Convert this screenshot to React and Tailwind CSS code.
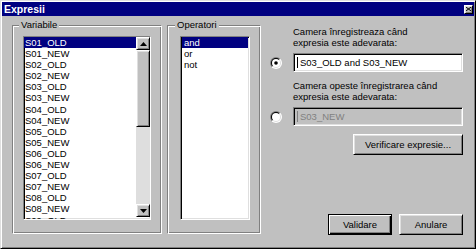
import React from "react";

const variabile = [
  "S01_OLD", "S01_NEW", "S02_OLD", "S02_NEW", "S03_OLD", "S03_NEW",
  "S04_OLD", "S04_NEW", "S05_OLD", "S05_NEW", "S06_OLD", "S06_NEW",
  "S07_OLD", "S07_NEW", "S08_OLD", "S08_NEW", "S09_OLD",
];
const operatori = ["and", "or", "not"];

// win95 style bevels
const sunken =
  "border border-t-[#808080] border-l-[#808080] border-r-white border-b-white shadow-[inset_1px_1px_#000,inset_-1px_-1px_#dfdfdf]";
const raised =
  "border border-t-white border-l-white border-r-black border-b-black shadow-[inset_1px_1px_#dfdfdf,inset_-1px_-1px_#808080]";
const etched =
  "border border-t-[#808080] border-l-[#808080] border-r-white border-b-white shadow-[inset_1px_1px_#fff,inset_-1px_-1px_#808080]";

const Arrow = ({ up }) => (
  <svg width="7" height="4" viewBox="0 0 7 4">
    {up ? <path d="M3.5 0 L7 4 L0 4 Z" fill="#000" /> : <path d="M0 0 L7 0 L3.5 4 Z" fill="#000" />}
  </svg>
);

const Radio = ({ checked }) => (
  <svg width="12" height="12" viewBox="0 0 12 12">
    <defs>
      <clipPath id={checked ? "tl1" : "tl2"}>
        <polygon points="0,0 12,0 0,12" />
      </clipPath>
      <clipPath id={checked ? "br1" : "br2"}>
        <polygon points="12,0 12,12 0,12" />
      </clipPath>
    </defs>
    <g clipPath={`url(#${checked ? "tl1" : "tl2"})`}>
      <circle cx="6" cy="6" r="6" fill="#808080" />
      <circle cx="6" cy="6" r="5" fill="#000" />
    </g>
    <g clipPath={`url(#${checked ? "br1" : "br2"})`}>
      <circle cx="6" cy="6" r="6" fill="#fff" />
      <circle cx="6" cy="6" r="5" fill="#dfdfdf" />
    </g>
    <circle cx="6" cy="6" r="4" fill="#fff" />
    {checked && <circle cx="6" cy="6" r="1.8" fill="#000" />}
  </svg>
);

const Item = ({ text, selected }) => (
  <div
    className={`h-[11.1px] leading-[11.1px] pl-[1px] whitespace-nowrap ${
      selected ? "bg-[#000080] text-white" : ""
    }`}
  >
    {text}
  </div>
);

const App = () => {
  return (
    <div className="w-[476px] h-[249px] p-[1px] bg-[#c0c0c0] border border-t-[#dfdfdf] border-l-[#dfdfdf] border-r-black border-b-black shadow-[inset_1px_1px_#fff,inset_-1px_-1px_#808080] overflow-hidden font-['Liberation_Sans',Arial,sans-serif] text-[9.5px] text-black">
      {/* title bar */}
      <div className="h-[14px] bg-[#000080] flex items-center justify-between pl-[2px] pr-[1px]">
        <span className="text-white font-bold text-[10.5px] leading-[14px]">Expresii</span>
        <div className={`w-[9px] h-[9px] bg-[#c0c0c0] flex items-center justify-center ${raised}`}>
          <svg width="5" height="4" viewBox="0 0 5 4">
            <path d="M0 0 L5 4 M5 0 L0 4" stroke="#000" strokeWidth="1" />
          </svg>
        </div>
      </div>

      <div className="flex pl-[10px] pt-[4px]">
        {/* Variabile */}
        <fieldset className={`w-[150px] h-[214px] p-0 m-0 ${etched}`}>
          <legend className="ml-[6px] px-[2px] leading-[10px] bg-[#c0c0c0]">Variabile</legend>
          <div className={`ml-[10px] mt-[6px] w-[128px] h-[184px] bg-white flex ${sunken}`}>
            <div className="flex-1 overflow-hidden">
              {variabile.map((v, i) => (
                <Item key={v} text={v} selected={i === 0} />
              ))}
            </div>
            <div className="w-[14px] flex flex-col">
              <div className={`h-[13px] bg-[#c0c0c0] flex items-center justify-center ${raised}`}>
                <Arrow up />
              </div>
              <div className={`h-[77px] bg-[#c0c0c0] ${raised}`} />
              <div className="h-[77px] bg-[#dedede]" />
              <div className={`h-[13px] bg-[#c0c0c0] flex items-center justify-center ${raised}`}>
                <Arrow />
              </div>
            </div>
          </div>
        </fieldset>

        {/* Operatori */}
        <fieldset className={`ml-[5px] w-[94px] h-[214px] p-0 m-0 ${etched}`}>
          <legend className="ml-[7px] px-[2px] leading-[10px] bg-[#c0c0c0]">Operatori</legend>
          <div className={`ml-[12px] mt-[6px] w-[70px] h-[184px] bg-white ${sunken}`}>
            <div className="mx-[1px]">
              {operatori.map((o, i) => (
                <div
                  key={o}
                  className={`h-[11.1px] leading-[11.1px] pl-[2px] ${i === 0 ? "bg-[#000080] text-white" : ""}`}
                >
                  {o}
                </div>
              ))}
            </div>
          </div>
        </fieldset>

        {/* right side */}
        <div className="ml-[9px] pt-[6px] w-[193px] flex flex-col">
          <div className="pl-[23px] leading-[11px]">
            <div>Camera înregistreaza când</div>
            <div>expresia este adevarata:</div>
          </div>
          <div className="mt-[5px] flex items-center">
            <Radio checked />
            <div className={`ml-[11px] w-[170px] h-[19px] bg-white flex items-center pl-[3px] ${sunken}`}>
              <span className="w-[1px] h-[11px] bg-black" />
              <span className="ml-[2px] leading-[11px]">S03_OLD and S03_NEW</span>
            </div>
          </div>
          <div className="mt-[8px] pl-[23px] leading-[11px]">
            <div>Camera opeste înregistrarea când</div>
            <div>expresia este adevarata:</div>
          </div>
          <div className="mt-[5px] flex items-center">
            <Radio />
            <div className={`ml-[11px] w-[170px] h-[19px] bg-[#c0c0c0] flex items-center pl-[3px] text-[#808080] ${sunken}`}>
              <span className="w-[1px] h-[11px] bg-[#808080]" />
              <span className="ml-[2px] leading-[11px]">S03_NEW</span>
            </div>
          </div>
          <div className="mt-[8px] flex justify-end">
            <button className={`w-[110px] h-[21px] bg-[#c0c0c0] text-[9.5px] leading-[11px] ${raised}`}>
              Verificare expresie...
            </button>
          </div>
          <div className="mt-[59px] flex justify-end gap-[7px]">
            <button className="w-[64px] h-[21px] bg-[#c0c0c0] text-[9.5px] leading-[11px] border border-black shadow-[inset_1px_1px_#fff,inset_-1px_-1px_#000,inset_-2px_-2px_#808080]">
              Validare
            </button>
            <button className={`w-[64px] h-[21px] bg-[#c0c0c0] text-[9.5px] leading-[11px] ${raised}`}>
              Anulare
            </button>
          </div>
        </div>
      </div>
    </div>
  );
};

export default App;
